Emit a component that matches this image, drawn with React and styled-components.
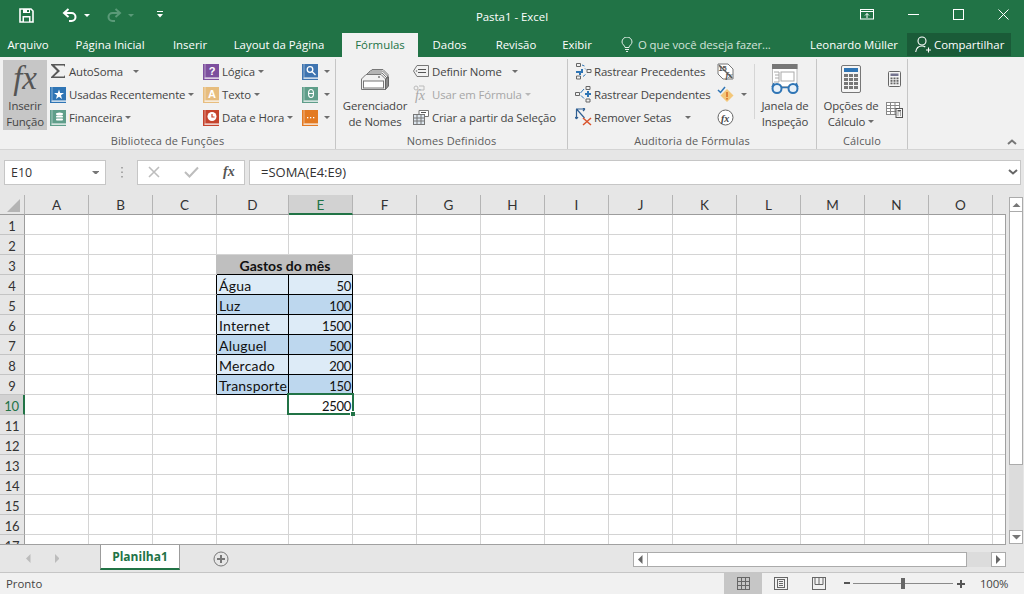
import React from "react";
import styled, { createGlobalStyle } from "styled-components";

const Global = createGlobalStyle`
  html, body { margin: 0; padding: 0; overflow: hidden; background: #e6e6e6; }
  * { box-sizing: border-box; }
  svg { display: block; flex: none; }
`;

const UI = `"Open Sans", "Noto Sans", sans-serif`;
const SHEET = `Lato, "Open Sans", sans-serif`;
const GREEN = "#217346";

const Window = styled.div`
  width: 1024px; height: 594px; display: flex; flex-direction: column; overflow: hidden;
  font-family: ${UI}; font-size: 11.4px; color: #444; background: #e6e6e6;
`;
const TitleBar = styled.header`
  height: 33px; background: ${GREEN}; color: #fff; display: grid; grid-template-columns: 1fr auto 1fr; align-items: center;
`;
const Quick = styled.div`display: flex; align-items: center; padding: 0 0 2px 19px;`;
const QuickSlot = styled.span`display: flex; align-items: center; margin-left: ${p => p.$ml || 0}px;`;
const Title = styled.div`font-size: 11.4px;`;
const WinControls = styled.div`display: flex; justify-content: flex-end; align-items: center; padding: 0 15px 3px 0; gap: 34px;`;

const TabBar = styled.nav`height: 24px; background: ${GREEN}; color: #fff; display: flex; align-items: stretch;`;
const Tab = styled.div`
  width: ${p => p.$w}px; display: flex; align-items: center; justify-content: center; white-space: nowrap; padding-bottom: 1px;
  background: ${p => (p.$active ? "#f1f1f1" : "transparent")}; color: ${p => (p.$active ? GREEN : "#fff")};
`;
const Tell = styled.div`display: flex; align-items: center; gap: 5px; padding: 0 0 1px 18px; width: 207px; color: #d3e3da; white-space: nowrap; letter-spacing: -.1px;`;
const User = styled.div`width: 97px; padding-bottom: 1px; display: flex; align-items: center; white-space: nowrap;`;
const Share = styled.div`width: 104px; height: 23px; background: #1a5b38; display: flex; align-items: center; gap: 3px; padding-left: 8px;`;

const Ribbon = styled.section`
  height: 93px; background: #f1f1f1; border-bottom: 1px solid #d4d4d4; display: flex; position: relative; letter-spacing: -.13px;
`;
const Group = styled.div`
  width: ${p => p.$w}px; height: 90px; margin-top: 2px; display: flex; flex-direction: column; flex: none;
  border-right: 1px solid #c6c6c6; padding-top: 1px;
`;
const GroupBody = styled.div`height: 70px; display: flex; padding-left: ${p => p.$pl || 0}px;`;
const GroupLabel = styled.div`flex: 1; display: flex; align-items: center; justify-content: center; color: #5c5c5c; font-size: 11px; letter-spacing: .1px; padding: 3px 0 0 0;`;
const BigButton = styled.div`
  flex: none; width: ${p => p.$w}px; height: 70px; margin-right: ${p => p.$mr || 0}px; display: flex; flex-direction: column; align-items: center; justify-content: flex-end;
  background: ${p => (p.$active ? "#c6c6c6" : "transparent")}; line-height: 16px; text-align: center; white-space: nowrap;
`;
const BigIcon = styled.div`flex: 1; display: flex; align-items: center; justify-content: center; width: 100%; padding-top: ${p => p.$pt || 0}px;`;
const FxBig = styled.span`font-family: "Liberation Serif", serif; font-style: italic; font-size: 33px; color: #555; line-height: 1;`;
const Column = styled.div`flex: none; width: ${p => p.$w}px; display: flex; flex-direction: column;`;
const SmallRow = styled.div`height: 23px; display: flex; align-items: center; white-space: nowrap; color: ${p => (p.$off ? "#a6a6a6" : "#444")};`;
const IconSlot = styled.span`width: ${p => p.$w || 19}px; height: 18px; display: flex; align-items: center; flex: none;`;
const Caret = styled.span`
  display: inline-block; width: 0; height: 0; margin-left: ${p => p.$ml ?? 3}px; flex: none;
  border-left: 3px solid transparent; border-right: 3px solid transparent; border-top: 3px solid ${p => p.$c || "#6d6d6d"};
`;
const InnerRule = styled.div`flex: none; width: 1px; height: 55px; margin: 4px 5px 0 0; background: #d6d6d6;`;
const CollapseSlot = styled.div`position: absolute; right: 7px; bottom: 4px;`;
const SmallLine = styled.span`display: flex; align-items: center;`;
const SideIcon = styled.div`height: ${p => p.$h}px; display: flex; align-items: center; justify-content: center;`;

const FormulaRow = styled.div`height: 46px; padding: 10px 3px 10px 4px; display: flex; align-items: stretch; background: #e6e6e6;`;
const NameBox = styled.div`
  width: 102px; background: #fff; border: 1px solid #c6c6c6; display: flex; align-items: center; justify-content: space-between; padding: 0 6px; color: #333; font-size: 12.4px;
`;
const Grip = styled.div`width: 31px; display: flex; align-items: center; justify-content: center;`;
const FxBox = styled.div`width: 108px; background: #fff; border: 1px solid #c6c6c6; display: flex; align-items: center; padding-left: 10px; gap: 24px;`;
const FxSmall = styled.span`font-family: "Liberation Serif", serif; font-style: italic; font-weight: 700; font-size: 14px; color: #555;`;
const FormulaInput = styled.div`
  flex: 1; margin-left: 4px; background: #fff; border: 1px solid #c6c6c6; display: flex; align-items: center; justify-content: space-between; padding: 0 2px 0 11px; color: #333; font-size: 13px;
`;

const SheetArea = styled.div`height: 350px; display: flex; background: #e6e6e6;`;
const GridWrap = styled.div`width: 1006px; height: 350px; overflow: hidden; position: relative; background: #fff;`;
const Grid = styled.div`
  display: grid; grid-template-columns: 25px repeat(3, 64px) 72px repeat(11, 64px) 13px; grid-auto-rows: 20px;
  font-family: ${SHEET}; font-size: 14px; color: #111;
`;
const Corner = styled.div`background: #e6e6e6; border-right: 1px solid #b4b4b4; border-bottom: 1px solid #9c9c9c; padding: 4px 0 0 7px;`;
const ColHead = styled.div`
  display: flex; align-items: center; justify-content: center; font-size: 13.5px; padding-top: 1px;
  background: ${p => (p.$on ? "#d2d2d2" : "#e6e6e6")}; color: ${p => (p.$on ? GREEN : "#333")};
  border-right: 1px solid ${p => (p.$none ? "transparent" : "#b4b4b4")}; border-bottom: ${p => (p.$on ? `2px solid ${GREEN}` : "1px solid #9c9c9c")};
`;
const RowHead = styled.div`
  display: flex; align-items: center; justify-content: center; font-size: 13px; letter-spacing: -.2px; padding-top: 2px;
  background: ${p => (p.$on ? "#d2d2d2" : "#e6e6e6")}; color: ${p => (p.$on ? GREEN : "#333")};
  border-right: ${p => (p.$on ? `2px solid ${GREEN}` : "1px solid #9c9c9c")}; border-bottom: 1px solid #c4c4c4;
`;
const Cell = styled.div`
  position: relative; z-index: ${p => (p.$top ? 2 : "auto")}; display: flex; align-items: center; white-space: nowrap;
  grid-column: span ${p => p.$span || 1}; padding: 2px 1px 0 2px;
  letter-spacing: ${p => (p.$align === "right" ? "-.3px" : p.$bold ? "0" : ".22px")};
  font-size: ${p => (p.$align === "right" ? "13px" : "14px")};
  justify-content: ${p => (p.$align === "right" ? "flex-end" : p.$align === "center" ? "center" : "flex-start")};
  font-weight: ${p => (p.$bold ? 700 : 400)}; background: ${p => p.$bg || "#fff"};
  border-right: 1px solid ${p => p.$r || "#d4d4d4"}; border-bottom: 1px solid ${p => p.$b || "#d4d4d4"};
`;
const Selection = styled.div`position: absolute; left: -2px; top: -2px; width: 67px; height: 22px; border: 2px solid ${GREEN}; pointer-events: none;`;
const Handle = styled.div`position: absolute; right: -3px; bottom: -3px; width: 5px; height: 5px; background: ${GREEN}; border-left: 1px solid #fff; border-top: 1px solid #fff;`;
const GridEdge = styled.div`position: absolute; left: 0; right: 0; bottom: 0; height: 1px; background: #a0a0a0;`;
const GridEdgeV = styled.div`position: absolute; right: 0; top: 19px; bottom: 0; width: 1px; background: #a0a0a0;`;

const VScroll = styled.div`width: 18px; padding: 2px 1px 1px 3px; display: flex; flex-direction: column;`;
const ScrollBtn = styled.div`
  width: 14px; height: ${p => p.$h || 15}px; background: #fff; border: 1px solid #ababab; display: flex; align-items: center; justify-content: center; flex: none;
`;
const VThumb = styled.div`height: 253px; background: #fff; border: 1px solid #ababab; border-top: 0; flex: none;`;
const VTrack = styled.div`flex: 1; background: #dcdcdc;`;

const SheetBar = styled.div`height: 28px; display: flex; background: #e6e6e6; border-bottom: 1px solid #c6c6c6;`;
const NavArrows = styled.div`width: 100px; display: flex; align-items: center; gap: 24px; padding-left: 26px;`;
const SheetTab = styled.div`
  width: 80px; height: 26px; background: #fff; border-bottom: 2px solid ${GREEN}; border-left: 1px solid #9c9c9c; border-right: 1px solid #9c9c9c; margin-top: -1px;
  display: flex; align-items: center; justify-content: center; color: ${GREEN}; font-weight: 700; font-size: 12px;
`;
const AddSheet = styled.div`width: 81px; display: flex; align-items: center; padding: 0 0 0 33px;`;
const HScroll = styled.div`margin-left: 372px; width: 373px; height: 15px; margin-top: 7px; display: flex;`;
const HThumb = styled.div`width: 319px; background: #fff; border: 1px solid #ababab; border-left: 0;`;
const HTrack = styled.div`flex: 1; background: #dcdcdc;`;
const HBtn = styled.div`width: 15px; height: 15px; background: #fff; border: 1px solid #ababab; display: flex; align-items: center; justify-content: center; flex: none;`;

const StatusBar = styled.footer`height: 21px; background: #f1f1f1; display: flex; align-items: stretch; color: #444;`;
const StatusText = styled.div`width: 724px; padding-left: 6px; display: flex; align-items: center; padding-bottom: 1px;`;
const ViewBtn = styled.div`width: 38px; display: flex; align-items: center; justify-content: center; background: ${p => (p.$on ? "#c6c6c6" : "transparent")};`;
const Zoomer = styled.div`display: flex; align-items: center; padding-left: 5px; gap: 2px;`;
const ZoomSign = styled.span`width: 8px; height: 8px; display: flex; align-items: center; justify-content: center;`;
const Track = styled.div`width: 100px; height: 1px; background: #8a8a8a; position: relative; margin-right: 2px;`;
const Knob = styled.div`position: absolute; left: 48px; top: -5px; width: 4px; height: 11px; background: #666;`;
const Percent = styled.div`margin-left: 13px; font-size: 11.4px; display: flex; align-items: center; letter-spacing: -.2px;`;

const Tri = ({ dir, c = "#777", s = 6 }) => {
  const pts = { up: "0,6 6,0 12,6", down: "0,0 12,0 6,6", left: "6,0 6,12 0,6", right: "0,0 0,12 6,6" }[dir];
  const horizontal = dir === "up" || dir === "down";
  return (
    <svg width={horizontal ? s * 1.5 : s * 0.75} height={horizontal ? s * 0.75 : s * 1.5} viewBox={horizontal ? "0 0 12 6" : "0 0 6 12"}>
      <polygon points={pts} fill={c} />
    </svg>
  );
};

const Save = () => (
  <svg width="15" height="15" viewBox="0 0 15 15" fill="none">
    <path d="M1 1h11l2 2v11H1z" stroke="#fff" strokeWidth="1.600" />
    <rect x="4" y="1" width="7" height="4" fill="#fff" />
    <rect x="8" y="2" width="2" height="2" fill={GREEN} />
    <rect x="3.500" y="8" width="8" height="6" fill="#fff" />
    <rect x="5" y="9.500" width="5" height="4" fill={GREEN} />
  </svg>
);
const Undo = ({ c = "#fff" }) => (
  <svg width="16" height="14" viewBox="0 0 16 14" fill="none" stroke={c} strokeWidth="2">
    <path d="M6.500 1 2 5l4.500 4M2 5h7.500a4 4 0 0 1 0 8H7" />
  </svg>
);
const Redo = () => (
  <svg width="16" height="14" viewBox="0 0 16 14" fill="none" stroke="#5a9a78" strokeWidth="2">
    <path d="M9.500 1 14 5 9.500 9M14 5H6.500a4 4 0 0 0 0 8H9" />
  </svg>
);
const Customize = () => (
  <svg width="8" height="8" viewBox="0 0 8 8"><rect x="1" y="0" width="6" height="1" fill="#fff" /><polygon points="1,3 7,3 4,6.500" fill="#fff" /></svg>
);
const RibbonDisplay = () => (
  <svg width="14" height="11" viewBox="0 0 14 11" fill="none" stroke="#fff"><rect x=".5" y=".5" width="13" height="9.500" /><path d="M.5 2.500h13M7 9V4.500M5 6.500l2-2 2 2" /></svg>
);
const Minimize = () => <svg width="11" height="11" viewBox="0 0 11 11"><path d="M0 5.500h11" stroke="#fff" /></svg>;
const Maximize = () => <svg width="11" height="11" viewBox="0 0 11 11"><rect x=".5" y=".5" width="10" height="10" fill="none" stroke="#fff" /></svg>;
const CloseX = () => <svg width="11" height="11" viewBox="0 0 11 11"><path d="M.5.5l10 10M10.500.5l-10 10" stroke="#fff" /></svg>;
const Bulb = () => (
  <svg width="12" height="15" viewBox="0 0 12 15" fill="none" stroke="#e4efe9"><path d="M4 10.500C4 8.500 1 7.500 1 5a5 5 0 0 1 10 0c0 2.500-3 3.500-3 5.500zM4 12.500h4M5 14.500h2" /></svg>
);
const Person = () => (
  <svg width="16" height="17" viewBox="0 0 16 17" fill="none" stroke="#fff" strokeWidth="1.100"><circle cx="7" cy="5" r="4" /><path d="M.7 16c.5-3.500 2.500-6 6.300-6 1.500 0 2.500.4 3.300 1M11 14h5M13.500 11.500v5" /></svg>
);
const Sigma = () => (
  <svg width="16" height="16" viewBox="0 0 16 16"><path d="M1 1h14v3l-1-1.500H4.500L10 8l-6 5.500h10l1-1.500v3H1v-1l6-6L1 2z" fill="#595959" /></svg>
);
const Book = ({ c, glyph, g = "#fff" }) => (
  <svg width="16" height="17" viewBox="0 0 16 17">
    <rect x="1" y="1" width="15" height="14" fill={c} />
    <rect x="0" y="1" width="1.500" height="16" fill={c} />
    <rect x="0" y="15.500" width="16" height="1.500" fill={c} />
    <rect x="1.500" y="14.500" width="14.500" height="1" fill="#fff" />
    <rect x="1.500" y="1" width="1" height="13.500" fill="#fff" opacity=".45" />
    {glyph === "star" && <polygon points="9,3.500 10.200,7 14,7 11,9.200 12,13 9,10.800 6,13 7,9.200 4,7 7.800,7" fill={g} />}
    {glyph === "coin" && <g fill={g}><ellipse cx="9.500" cy="5" rx="3.500" ry="1.500" /><rect x="6" y="6.800" width="7" height="1.800" rx=".9" /><rect x="6" y="9.600" width="7" height="1.800" rx=".9" /></g>}
    {glyph === "clock" && <g><circle cx="9" cy="7.500" r="4.500" fill="#fff" /><path d="M9 5v3h2.500" stroke={c} strokeWidth="1.200" fill="none" /></g>}
    {glyph === "search" && <g fill="none" stroke="#fff" strokeWidth="1.300"><circle cx="8" cy="6.500" r="2.800" /><path d="M10 8.500l3.500 3.500" /></g>}
    {glyph === "dots" && <g fill="#fff"><rect x="5" y="8" width="1.300" height="1.300" /><rect x="8" y="8" width="1.300" height="1.300" /><rect x="11" y="8" width="1.300" height="1.300" /></g>}
    {glyph === "theta" && <g fill="none" stroke="#fff" strokeWidth="1.100"><ellipse cx="9" cy="7.500" rx="2.500" ry="4" /><path d="M6.500 7.500h5" /></g>}
    {(glyph === "?" || glyph === "A") && <text x="9" y="12" textAnchor="middle" fontFamily="Liberation Sans, sans-serif" fontWeight="700" fontSize="11" fill={g}>{glyph}</text>}
  </svg>
);
const TagIcon = () => (
  <svg width="16" height="13" viewBox="0 0 16 13" fill="none" stroke="#777"><path d="M4 .5h11.500v11H4L.5 6z" /><path d="M5 4.500h8M5 7.500h8" stroke="#555" /><circle cx="3.500" cy="6" r=".8" fill="#777" stroke="none" /></svg>
);
const UseFormula = () => (
  <svg width="16" height="18" viewBox="0 0 16 18">
    <circle cx="3" cy="3" r="2" fill="none" stroke="#bbb" /><path d="M6 1h5v4H6" fill="none" stroke="#bbb" />
    <text x="2" y="15" fontFamily="Liberation Serif, serif" fontStyle="italic" fontSize="14" fill="#a8a8a8">fx</text>
  </svg>
);
const CreateSel = () => (
  <svg width="16" height="15" viewBox="0 0 16 15" fill="none" stroke="#777"><path d="M6 .5h9.500v6H6z" fill="#fff" /><path d="M8 2.500h5" stroke="#555" /><rect x=".5" y="4.500" width="11" height="10" fill="#dde6ee" /><path d="M.5 8h11M.5 11h11M4 4.500v10M8 4.500v10" /></svg>
);
const Manager = () => (
  <svg width="28" height="21" viewBox="0 0 28 21" fill="none" stroke="#777">
    <path d="M8 4 11 .5h11l5 5v7" fill="#f1f1f1" /><path d="M6 5.500 9 2h12.500l5 5v7" fill="#f1f1f1" /><path d="M4 7l3-3h14l5 5v7" fill="#f1f1f1" />
    <path d="M.5 10 5 5.500h15l4.500 4.500v10.500H.5z" fill="#f1f1f1" />
    <path d="M24.500 10 27.500 8v9l-3 3.500z" fill="#8a8a8a" stroke="#666" /><circle cx="18" cy="8" r="1" fill="#777" stroke="none" />
    <rect x="2.500" y="12" width="20" height="7" fill="#fff" />
  </svg>
);
const TracePrec = () => (
  <svg width="17" height="17" viewBox="0 0 17 17" fill="none">
    <path d="M1.500.5h4v3h-4zM12 6.500h4v3h-4zM1.500 13h4v3h-4z" stroke="#666" />
    <path d="M4 7h3v-2h2v2h0v2H7v2H5V9H2V7z" fill="#2f75b5" transform="translate(-1 1)" />
    <path d="M7 2l2.500 1M10 5.500l1 1M8 13.500l2.500-2" stroke="#2f75b5" />
  </svg>
);
const TraceDep = () => (
  <svg width="17" height="17" viewBox="0 0 17 17" fill="none">
    <path d="M.5 6.500h4v3h-4zM11 .5h4v3h-4zM11 13h4v3h-4z" stroke="#666" />
    <path d="M10 7h2V5h2v2h2v2h-2v2h-2V9h-2z" fill="#2f75b5" />
    <path d="M5.500 7L9 3M6 9.500l3 3" stroke="#2f75b5" />
  </svg>
);
const RemoveArrows = () => (
  <svg width="18" height="18" viewBox="0 0 18 18" fill="none">
    <path d="M1 1l9 0M1.500 1v10M1.500 1l8 9M1.500 11l-1.500-2M1.500 11l1.500-2M10 1L8 0M10 1L8 3" stroke="#2f5f93" strokeWidth="1.200" />
    <path d="M8 10l8 7M16 10l-8 7" stroke="#d9532c" strokeWidth="1.500" />
  </svg>
);
const ShowFormulas = () => (
  <svg width="17" height="17" viewBox="0 0 17 17" fill="none" stroke="#777">
    <path d="M1 1h10l5 5v10H6L1 11z" fill="#fff" />
    <path d="M2 2l13 13" stroke="#666" strokeWidth="1.400" />
    <text x="1.500" y="8" fontFamily="Liberation Sans, sans-serif" fontSize="7.500" fontWeight="700" fill="#555" stroke="none">15</text>
    <text x="8.500" y="15" fontFamily="Liberation Serif, serif" fontStyle="italic" fontSize="9" fontWeight="700" fill="#555" stroke="none">fx</text>
  </svg>
);
const ErrorCheck = () => (
  <svg width="17" height="17" viewBox="0 0 17 17">
    <path d="M1 4l2.500 2.500L8 1" stroke="#2f75b5" strokeWidth="1.500" fill="none" />
    <polygon points="10,3 16.500,9.500 10,16 3.500,9.500" fill="#f3c77a" />
    <rect x="9.200" y="6" width="1.600" height="5" fill="#d9722c" /><rect x="9.200" y="12" width="1.600" height="1.600" fill="#d9722c" />
  </svg>
);
const Evaluate = () => (
  <svg width="17" height="17" viewBox="0 0 17 17"><circle cx="8.500" cy="8.500" r="7.500" fill="#fff" stroke="#666" />
    <text x="4" y="12.500" fontFamily="Liberation Serif, serif" fontStyle="italic" fontSize="10" fontWeight="700" fill="#444">fx</text></svg>
);
const Watch = () => (
  <svg width="30" height="30" viewBox="0 0 30 30" fill="none">
    <rect x="2.500" y=".5" width="24.500" height="22" fill="#fff" stroke="#bbb" />
    <rect x="2" y="0" width="25.500" height="5" fill="#777" />
    <path d="M4 8h5v10H4M5 11h4M5 14h4" stroke="#aaa" />
    <rect x="11" y="8" width="13" height="9" stroke="#aaa" fill="#fff" />
    <circle cx="7" cy="24.500" r="4.500" stroke="#2f75b5" strokeWidth="2" fill="#e9f1f8" />
    <circle cx="23" cy="24.500" r="4.500" stroke="#2f75b5" strokeWidth="2" fill="#e9f1f8" />
    <path d="M11.500 23.500h7M2 23l2-4M28 23l-2-4" stroke="#2f75b5" strokeWidth="1.500" />
  </svg>
);
const Calc = () => (
  <svg width="20" height="28" viewBox="0 0 20 28">
    <rect x=".5" y=".5" width="19" height="27" rx="1.500" fill="#f5f5f5" stroke="#777" />
    <rect x="3" y="3" width="14" height="4" fill="#2f75b5" />
    {[9, 13, 17, 21].map(y => [3, 8, 13].map(x => <rect key={x + "-" + y} x={x} y={y} width="4" height="3" fill="#777" />))}
  </svg>
);
const CalcSmall = () => (
  <svg width="13" height="16" viewBox="0 0 13 16">
    <rect x=".5" y=".5" width="12" height="15" rx="1" fill="#f5f5f5" stroke="#666" />
    <rect x="2.500" y="2.500" width="8" height="2.500" fill="#557" opacity=".8" />
    {[6.500, 9, 11.500].map(y => [2.500, 5.500, 8.500].map(x => <rect key={x + "-" + y} x={x} y={y} width="2" height="1.800" fill="#666" />))}
  </svg>
);
const CalcSheet = () => (
  <svg width="17" height="16" viewBox="0 0 17 16" fill="none" stroke="#888">
    <rect x=".5" y=".5" width="13" height="12" fill="#fff" /><path d="M.5 3.500h13M.5 6.500h13M.5 9.500h13M4.500.5v12M9 .5v12" />
    <rect x="10" y="6.500" width="6.500" height="9" fill="#f5f5f5" stroke="#555" /><rect x="11.500" y="8" width="3.500" height="1.500" fill="#555" stroke="none" /><path d="M11.500 11h1M14 11h1M11.500 13h1M14 13h1" stroke="#555" />
  </svg>
);
const Chevron = ({ up, c = "#666" }) => (
  <svg width="10" height="6" viewBox="0 0 10 6" fill="none" stroke={c} strokeWidth="2"><path d={up ? "M1 5l4-3.500L9 5" : "M1 1l4 3.500L9 1"} /></svg>
);
const CrossGray = () => <svg width="12" height="12" viewBox="0 0 12 12"><path d="M1 1l10 10M11 1L1 11" stroke="#bdbdbd" strokeWidth="1.600" /></svg>;
const CheckGray = () => <svg width="15" height="12" viewBox="0 0 15 12"><path d="M1 6l4.500 4.500L14 1.500" stroke="#bdbdbd" strokeWidth="2" fill="none" /></svg>;
const Dots = () => (
  <svg width="2" height="11" viewBox="0 0 2 11" fill="#a8a8a8"><rect y="0" width="2" height="1.500" /><rect y="4.500" width="2" height="1.500" /><rect y="9" width="2" height="1.500" /></svg>
);
const CornerTri = () => <svg width="13" height="13" viewBox="0 0 13 13"><polygon points="13,0 13,13 0,13" fill="#b4b4b4" /></svg>;
const Plus = () => (
  <svg width="16" height="16" viewBox="0 0 16 16" fill="none" stroke="#777"><circle cx="8" cy="8" r="7" /><path d="M4 8h8M8 4v8" strokeWidth="2" /></svg>
);
const ViewNormal = () => (
  <svg width="13" height="13" viewBox="0 0 13 13" fill="none" stroke="#666"><rect x=".5" y=".5" width="12" height="12" /><path d="M.5 4.500h12M.5 8.500h12M4.500.5v12M8.500.5v12" /></svg>
);
const ViewPage = () => (
  <svg width="14" height="13" viewBox="0 0 14 13" fill="none" stroke="#666"><rect x=".5" y=".5" width="13" height="12" /><rect x="3.500" y="2.500" width="7" height="8" /><path d="M5 4.500h4M5 6.500h4M5 8.500h4" /></svg>
);
const ViewBreak = () => (
  <svg width="14" height="13" viewBox="0 0 14 13" fill="none" stroke="#666"><rect x=".5" y=".5" width="13" height="12" /><path d="M7 .5v7h4V.5M3 .5v7h4" /></svg>
);
const MinusMark = () => <svg width="6" height="3" viewBox="0 0 6 3"><rect width="6" height="2" fill="#555" /></svg>;
const PlusMark = () => <svg width="8" height="8" viewBox="0 0 8 8"><path d="M0 3h8v2H0zM3 0h2v8H3z" fill="#555" /></svg>;

const COLS = ["A", "B", "C", "D", "E", "F", "G", "H", "I", "J", "K", "L", "M", "N", "O"];
const DATA = {
  4: ["Água", 50], 5: ["Luz", 100], 6: ["Internet", 1500], 7: ["Aluguel", 500], 8: ["Mercado", 200], 9: ["Transporte", 150],
};
const fill = r => (r % 2 === 0 ? "#ddebf7" : "#bdd7ee");

const renderRow = r => {
  const out = [<RowHead key={"h" + r} $on={r === 10}>{r}</RowHead>];
  const inTable = DATA[r];
  COLS.forEach(c => {
    const k = c + r;
    if (r === 3 && c === "D") {
      out.push(<Cell key={k} $span={2} $bold $align="center" $bg="#bfbfbf" $b="#000" $r="#bfbfbf">Gastos do mês</Cell>);
    } else if (r === 3 && c === "E") {
      /* merged into D3 */
    } else if (inTable && c === "D") {
      out.push(<Cell key={k} $bg={fill(r)} $r="#000" $b="#000">{inTable[0]}</Cell>);
    } else if (inTable && c === "E") {
      out.push(<Cell key={k} $align="right" $bg={fill(r)} $r="#000" $b="#000">{inTable[1]}</Cell>);
    } else if (c === "C" && inTable) {
      out.push(<Cell key={k} $r="#000" />);
    } else if (c === "C" && r === 3) {
      out.push(<Cell key={k} $r="#bfbfbf" />);
    } else if (r === 10 && c === "E") {
      out.push(<Cell key={k} $align="right" $top>2500<Selection><Handle /></Selection></Cell>);
    } else {
      out.push(<Cell key={k} />);
    }
  });
  out.push(<Cell key={"P" + r} />);
  return out;
};

export default function App() {
  return (
    <Window>
      <Global />
      <TitleBar>
        <Quick>
          <Save />
          <QuickSlot $ml={28}><Undo /><Caret $ml={6} $c="#fff" /></QuickSlot>
          <QuickSlot $ml={16}><Redo /><Caret $ml={6} $c="#5a9a78" /></QuickSlot>
          <QuickSlot $ml={22}><Customize /></QuickSlot>
        </Quick>
        <Title>Pasta1 - Excel</Title>
        <WinControls><RibbonDisplay /><Minimize /><Maximize /><CloseX /></WinControls>
      </TitleBar>
      <TabBar>
        <Tab $w={56}>Arquivo</Tab>
        <Tab $w={108}>Página Inicial</Tab>
        <Tab $w={52}>Inserir</Tab>
        <Tab $w={126}>Layout da Página</Tab>
        <Tab $w={76} $active>Fórmulas</Tab>
        <Tab $w={63}>Dados</Tab>
        <Tab $w={70}>Revisão</Tab>
        <Tab $w={52}>Exibir</Tab>
        <Tell><Bulb />O que você deseja fazer...</Tell>
        <User>Leonardo Müller</User>
        <Share><Person />Compartilhar</Share>
      </TabBar>
      <Ribbon>
        <Group $w={336}>
          <GroupBody $pl={3}>
            <BigButton $w={44} $mr={3} $active>
              <BigIcon><FxBig>fx</FxBig></BigIcon>
              Inserir<br />Função
            </BigButton>
            <Column $w={153}>
              <SmallRow><IconSlot><Sigma /></IconSlot>AutoSoma<Caret $ml={10} /></SmallRow>
              <SmallRow><IconSlot><Book c="#2f75b5" glyph="star" /></IconSlot>Usadas Recentemente<Caret /></SmallRow>
              <SmallRow><IconSlot><Book c="#5f9e8a" glyph="coin" /></IconSlot>Financeira<Caret /></SmallRow>
            </Column>
            <Column $w={99}>
              <SmallRow><IconSlot><Book c="#7d4f9e" glyph="?" /></IconSlot>Lógica<Caret /></SmallRow>
              <SmallRow><IconSlot><Book c="#e7bd7e" glyph="A" /></IconSlot>Texto<Caret /></SmallRow>
              <SmallRow><IconSlot><Book c="#c5432c" glyph="clock" /></IconSlot>Data e Hora<Caret /></SmallRow>
            </Column>
            <Column $w={33}>
              <SmallRow><IconSlot $w={20}><Book c="#3f74b0" glyph="search" /></IconSlot><Caret $ml={2} /></SmallRow>
              <SmallRow><IconSlot $w={20}><Book c="#5f9e8a" glyph="theta" /></IconSlot><Caret $ml={2} /></SmallRow>
              <SmallRow><IconSlot $w={20}><Book c="#e37a22" glyph="dots" /></IconSlot><Caret $ml={2} /></SmallRow>
            </Column>
          </GroupBody>
          <GroupLabel>Biblioteca de Funções</GroupLabel>
        </Group>
        <Group $w={232}>
          <GroupBody $pl={3}>
            <BigButton $w={72} $mr={2}>
              <BigIcon $pt={2}><Manager /></BigIcon>
              Gerenciador<br />de Nomes
            </BigButton>
            <Column $w={150}>
              <SmallRow><IconSlot><TagIcon /></IconSlot>Definir Nome<Caret $ml={10} /></SmallRow>
              <SmallRow $off><IconSlot><UseFormula /></IconSlot>Usar em Fórmula<Caret $c="#b8b8b8" /></SmallRow>
              <SmallRow><IconSlot><CreateSel /></IconSlot>Criar a partir da Seleção</SmallRow>
            </Column>
          </GroupBody>
          <GroupLabel>Nomes Definidos</GroupLabel>
        </Group>
        <Group $w={249}>
          <GroupBody $pl={7}>
            <Column $w={142}>
              <SmallRow><IconSlot><TracePrec /></IconSlot>Rastrear Precedentes</SmallRow>
              <SmallRow><IconSlot><TraceDep /></IconSlot>Rastrear Dependentes</SmallRow>
              <SmallRow><IconSlot><RemoveArrows /></IconSlot>Remover Setas<Caret $ml={14} /></SmallRow>
            </Column>
            <Column $w={37}>
              <SmallRow><ShowFormulas /></SmallRow>
              <SmallRow><ErrorCheck /><Caret $ml={7} /></SmallRow>
              <SmallRow><Evaluate /></SmallRow>
            </Column>
            <InnerRule />
            <BigButton $w={50}>
              <BigIcon $pt={1}><Watch /></BigIcon>
              Janela de<br />Inspeção
            </BigButton>
          </GroupBody>
          <GroupLabel>Auditoria de Fórmulas</GroupLabel>
        </Group>
        <Group $w={91}>
          <GroupBody $pl={1}>
            <BigButton $w={66}>
              <BigIcon $pt={1}><Calc /></BigIcon>
              <span>Opções de</span>
              <SmallLine>Cálculo<Caret /></SmallLine>
            </BigButton>
            <Column $w={20}>
              <SideIcon $h={38}><CalcSmall /></SideIcon>
              <SideIcon $h={24}><CalcSheet /></SideIcon>
            </Column>
          </GroupBody>
          <GroupLabel>Cálculo</GroupLabel>
        </Group>
        <CollapseSlot><Chevron up c="#777" /></CollapseSlot>
      </Ribbon>
      <FormulaRow>
        <NameBox>E10<Tri dir="down" c="#777" s={5} /></NameBox>
        <Grip><Dots /></Grip>
        <FxBox><CrossGray /><CheckGray /><FxSmall>fx</FxSmall></FxBox>
        <FormulaInput>=SOMA(E4:E9)<Chevron c="#666" /></FormulaInput>
      </FormulaRow>
      <SheetArea>
        <GridWrap>
          <Grid>
            <Corner><CornerTri /></Corner>
            {COLS.map(c => <ColHead key={c} $on={c === "E"}>{c}</ColHead>)}
            <ColHead $none />
            {Array.from({ length: 17 }, (_, i) => renderRow(i + 1))}
          </Grid>
          <GridEdge />
          <GridEdgeV />
        </GridWrap>
        <VScroll>
          <ScrollBtn><Tri dir="up" /></ScrollBtn>
          <VThumb />
          <VTrack />
          <ScrollBtn $h={14}><Tri dir="down" /></ScrollBtn>
        </VScroll>
      </SheetArea>
      <SheetBar>
        <NavArrows><Tri dir="left" c="#bcbcbc" /><Tri dir="right" c="#bcbcbc" /></NavArrows>
        <SheetTab>Planilha1</SheetTab>
        <AddSheet><Plus /></AddSheet>
        <HScroll>
          <HBtn><Tri dir="left" c="#666" /></HBtn>
          <HThumb />
          <HTrack />
          <HBtn><Tri dir="right" c="#666" /></HBtn>
        </HScroll>
      </SheetBar>
      <StatusBar>
        <StatusText>Pronto</StatusText>
        <ViewBtn $on><ViewNormal /></ViewBtn>
        <ViewBtn><ViewPage /></ViewBtn>
        <ViewBtn><ViewBreak /></ViewBtn>
        <Zoomer>
          <ZoomSign><MinusMark /></ZoomSign>
          <Track><Knob /></Track>
          <ZoomSign><PlusMark /></ZoomSign>
          <Percent>100%</Percent>
        </Zoomer>
      </StatusBar>
    </Window>
  );
}
